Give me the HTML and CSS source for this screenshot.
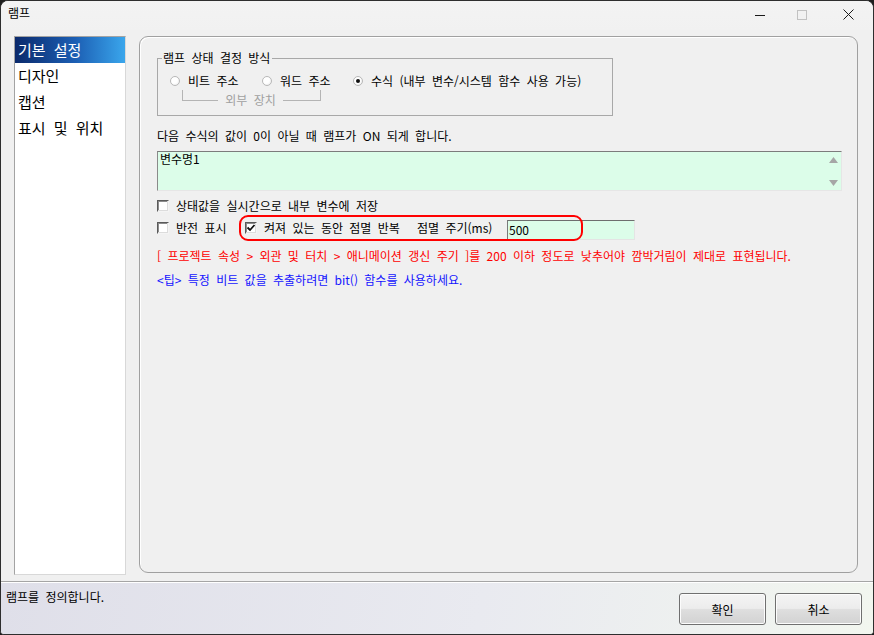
FILE: index.html
```html
<!DOCTYPE html>
<html lang="ko">
<head>
    <meta charset="UTF-8">
    <title>램프</title>
    <link rel="stylesheet" href="styles.css">
</head>
<body>
    <div class="window">
        <!-- title bar -->
        <div class="titlebar">
            <span class="title">램프</span>
            <div class="controls">
                <svg class="ctl min" width="10" height="10" viewBox="0 0 10 10"><path d="M0 5.5h10" stroke="#1a1a1a" stroke-width="1"/></svg>
                <svg class="ctl max" width="10" height="10" viewBox="0 0 10 10"><rect x="0.5" y="0.5" width="9" height="9" fill="none" stroke="#c2c2c2" stroke-width="1"/></svg>
                <svg class="ctl close" width="11" height="11" viewBox="0 0 11 11"><path d="M0.5 0.5L10.5 10.5M10.5 0.5L0.5 10.5" stroke="#1a1a1a" stroke-width="1"/></svg>
            </div>
        </div>

        <div class="main">
            <ul class="nav">
                <li class="selected">기본 설정</li>
                <li>디자인</li>
                <li>캡션</li>
                <li>표시 및 위치</li>
            </ul>

            <div class="panel">
                <fieldset class="group">
                    <legend>램프 상태 결정 방식</legend>
                    <div class="radios">
                        <label class="option opt-bit"><span class="radio"></span>비트 주소</label>
                        <label class="option opt-word"><span class="radio"></span>워드 주소</label>
                        <label class="option"><span class="radio checked"></span>수식 (내부 변수/시스템 함수 사용 가능)</label>
                    </div>
                    <div class="ext">
                        <span class="bracket left"></span>
                        <span class="ext-label">외부 장치</span>
                        <span class="bracket right"></span>
                    </div>
                </fieldset>

                <p class="desc">다음 수식의 값이 0이 아닐 때 램프가 ON 되게 합니다.</p>

                <div class="formula">
                    <div class="formula-text">변수명1</div>
                    <div class="scrollbar">
                        <svg width="9" height="6" viewBox="0 0 9 6"><path d="M4.5 0L9 6H0z" fill="#a6a6a6"/></svg>
                        <svg width="9" height="6" viewBox="0 0 9 6"><path d="M0 0H9L4.5 6z" fill="#a6a6a6"/></svg>
                    </div>
                </div>

                <label class="check"><span class="box"></span>상태값을 실시간으로 내부 변수에 저장</label>

                <div class="blink-row">
                    <label class="check invert"><span class="box"></span>반전 표시</label>
                    <label class="check blink"><span class="box checked">
                        <svg width="10" height="10" viewBox="0 0 10 10"><path d="M1.5 4.5L4 7L8.5 2" fill="none" stroke="#111" stroke-width="1.8"/></svg>
                    </span>켜져 있는 동안 점멸 반복</label>
                    <span class="period-label">점멸 주기(ms)</span>
                    <div class="period-input">500</div>
                    <span class="mark"></span>
                </div>

                <p class="warn">[ 프로젝트 속성 &gt; 외관 및 터치 &gt; 애니메이션 갱신 주기 ]를 200 이하 정도로 낮추어야 깜박거림이 제대로 표현됩니다.</p>
                <p class="tip">&lt;팁&gt; 특정 비트 값을 추출하려면 bit() 함수를 사용하세요.</p>
            </div>
        </div>

        <div class="status">
            <span class="status-text">램프를 정의합니다.</span>
            <div class="buttons">
                <button class="btn">확인</button>
                <button class="btn">취소</button>
            </div>
        </div>
    </div>
</body>
</html>
```

FILE: styles.css
```css
* {
    margin: 0;
    padding: 0;
    box-sizing: border-box;
}
body {
    background: #1e1e1e;
    font-family: "Noto Sans CJK KR", "Liberation Sans", sans-serif;
    font-size: 12px;
    line-height: 16px;
    color: #000;
    word-spacing: 3px;
}
.window {
    width: 874px;
    height: 635px;
    border: 1px solid #2e2e2e;
    border-radius: 8px 8px 4px 4px;
    background: #f0f0f0;
    overflow: hidden;
    display: flex;
    flex-direction: column;
}

/* title bar */
.titlebar {
    height: 29px;
    background: linear-gradient(#f3f3f3, #f1f1f1);
    display: flex;
    justify-content: space-between;
    align-items: flex-start;
    padding: 4px 0 0 7px;
}
.title {
    font-size: 12px;
}
.controls {
    display: flex;
    align-items: center;
    margin-top: 4px;
    margin-right: 19px;
}
.ctl {
    display: block;
}
.max {
    margin-left: 32px;
}
.close {
    margin-left: 36px;
}

/* main area */
.main {
    height: 551px;
    display: flex;
    align-items: flex-start;
    padding: 6px 15px 0 13px;
}
.nav {
    list-style: none;
    width: 112px;
    height: 539px;
    background: #fff;
    border: 1px solid #a3a3a3;
    border-right-color: #d8d8d8;
    border-bottom-color: #d8d8d8;
    font-size: 15px;
    word-spacing: 4px;
}
.nav li {
    height: 26px;
    line-height: 26px;
    padding-left: 3px;
    white-space: nowrap;
}
.nav li.selected {
    background: linear-gradient(to right, #0b2a6c, #1c5fb4 55%, #3aa6ec);
    color: #fff;
}
.panel {
    flex: 1;
    height: 537px;
    margin-left: 13px;
    border: 1px solid #a0a0a0;
    border-radius: 9px;
    box-shadow: inset 1px 1px 0 #fff;
    padding: 13px 15px 0 17px;
}

/* group box */
.group {
    width: 456px;
    border: 1px solid #a8a8a8;
    padding: 0 0 8px 4px;
}
.group legend {
    padding: 0 2px 0 1px;
    line-height: 16px;
}
.radios {
    display: flex;
    align-items: center;
    height: 16px;
    margin: 7px 0 0 8px;
}
.option {
    display: flex;
    align-items: center;
    white-space: nowrap;
}
.opt-bit {
    width: 92px;
}
.opt-word {
    width: 91px;
}
.radio {
    width: 10px;
    height: 10px;
    border-radius: 50%;
    border: 1px solid #b8b8b8;
    background: radial-gradient(circle at 40% 40%, #fff 45%, #e4e4e4);
    margin-right: 8px;
    display: flex;
    align-items: center;
    justify-content: center;
}
.radio.checked::after {
    content: "";
    width: 4px;
    height: 4px;
    border-radius: 50%;
    background: #111;
}
.ext {
    display: flex;
    align-items: flex-start;
    height: 17px;
    margin: 1px 0 0 20px;
    color: #a0a0a0;
}
.bracket {
    height: 11px;
    border-bottom: 1px solid #b4b4b4;
}
.bracket.left {
    width: 36px;
    border-left: 1px solid #b4b4b4;
}
.bracket.right {
    width: 38px;
    border-right: 1px solid #b4b4b4;
}
.ext-label {
    width: 65px;
    text-align: center;
    margin-top: 3px;
    line-height: 14px;
}

/* formula */
.desc {
    margin-top: 12px;
}
.formula {
    display: flex;
    height: 40px;
    margin-top: 7px;
    background: #dcfde9;
    border: 1px solid #e6e6e6;
    border-top-color: #7c7c7c;
    border-left-color: #8a8a8a;
}
.formula-text {
    flex: 1;
    padding: 0 2px;
    line-height: 14px;
}
.scrollbar {
    width: 16px;
    display: flex;
    flex-direction: column;
    justify-content: space-between;
    align-items: center;
    padding: 5px 0 4px;
}
.scrollbar svg {
    display: block;
}

/* checkboxes */
.check {
    display: flex;
    align-items: center;
    height: 16px;
    margin-top: 7px;
    white-space: nowrap;
}
.box {
    width: 12px;
    height: 12px;
    background: #fff;
    border: 1px solid #f4f4f4;
    border-top-color: #5a5a5a;
    border-left-color: #5a5a5a;
    box-shadow: inset -1px -1px 0 #dcdcdc, inset 1px 1px 0 #8c8c8c;
    margin-right: 7px;
    display: flex;
    align-items: center;
    justify-content: center;
}
.box svg {
    display: block;
}
.blink-row {
    position: relative;
    display: flex;
    align-items: center;
    height: 26px;
    margin-top: 1px;
}
.blink-row .check {
    margin-top: 0;
}
.invert {
    width: 88px;
}
.blink {
    width: 172px;
}
.period-label {
    width: 90px;
    white-space: nowrap;
}
.period-input {
    width: 128px;
    height: 20px;
    margin-top: 4px;
    background: #dcfde9;
    border: 1px solid #e4e4e4;
    border-top-color: #6e6e6e;
    border-left-color: #7a7a7a;
    padding-left: 1px;
    line-height: 17px;
}
.mark {
    position: absolute;
    left: 82px;
    top: 0;
    width: 344px;
    height: 26px;
    border: 2px solid #f00;
    border-radius: 9px;
}

/* notes */
.warn {
    margin-top: 7px;
    color: #f00;
    white-space: nowrap;
}
.tip {
    margin-top: 8px;
    color: #1414ff;
}

/* status bar */
.status {
    flex: 1;
    display: flex;
    justify-content: space-between;
    align-items: flex-start;
    border-top: 1px solid #a5a5a5;
    box-shadow: inset 0 1px 0 #fff;
    background: linear-gradient(100deg, #dfdfe9, #e9eaf0 55%, #f2f6ef);
    padding: 7px 11px 0 5px;
}
.buttons {
    display: flex;
    gap: 9px;
    margin-top: 4px;
}
.btn {
    width: 87px;
    height: 32px;
    font-family: "Noto Sans CJK KR", "Liberation Sans", sans-serif;
    font-size: 12px;
    color: #000;
    border: 1px solid #707070;
    border-radius: 3px;
    background: linear-gradient(#f4f4f4, #ececec 48%, #dedede 52%, #d2d2d2);
    box-shadow: inset 0 0 0 1px #fcfcfc;
}
```
